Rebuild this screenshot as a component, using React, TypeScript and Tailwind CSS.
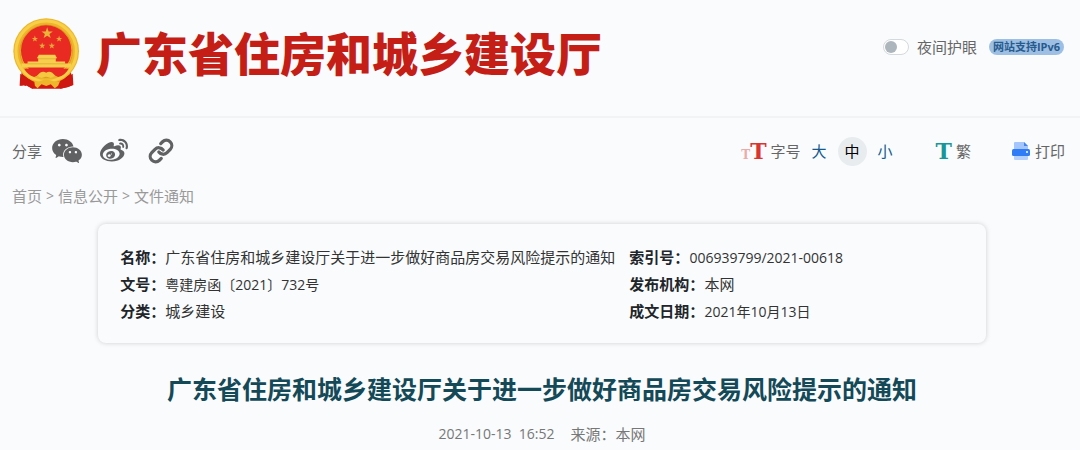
// App.tsx
import React, { useState } from 'react';
import { AiFillWechat } from 'react-icons/ai';
import { FaWeibo } from 'react-icons/fa';
import { Link } from 'lucide-react';

interface InfoItem {
  label: string;
  value: string;
  numeric?: boolean;
}

const leftInfo: InfoItem[] = [
  { label: '名称：', value: '广东省住房和城乡建设厅关于进一步做好商品房交易风险提示的通知' },
  { label: '文号：', value: '粤建房函〔2021〕732号', numeric: true },
  { label: '分类：', value: '城乡建设' },
];

const rightInfo: InfoItem[] = [
  { label: '索引号：', value: '006939799/2021-00618', numeric: true },
  { label: '发布机构：', value: '本网' },
  { label: '成文日期：', value: '2021年10月13日', numeric: true },
];

const crumbs = ['首页', '信息公开', '文件通知'];
const fontSizes = ['大', '中', '小'];

const STAR = 'M0 -10L2.4 -3.1L9.5 -3.1L3.8 1.2L5.9 8.1L0 4L-5.9 8.1L-3.8 1.2L-9.5 -3.1L-2.4 -3.1Z';

const Emblem: React.FC = () => (
  <svg className="h-[71px] w-[67px] shrink-0" viewBox="24 24 202 214" aria-hidden="true">
    <path d="M52 168L46 228L62 226L82 237H168L190 232L204 226L196 168Z" fill="#d3160f" />
    <path d="M52 180L66 210L60 228M196 180L182 210L190 228" fill="none" stroke="#a90f0c" strokeWidth="5" />
    <circle cx="124" cy="124" r="99" fill="#edb62a" />
    <circle cx="124" cy="124" r="91" fill="none" stroke="#f8cf48" strokeWidth="9" />
    <circle cx="124" cy="124" r="79" fill="none" stroke="#d99a20" strokeWidth="3" />
    <circle cx="124" cy="122" r="76" fill="#e92a22" />
    <path d={STAR} transform="translate(127 70) scale(1.8)" fill="#e9b63a" />
    <path d={STAR} transform="translate(90 87)" fill="#e9a93a" />
    <path d={STAR} transform="translate(163 87)" fill="#e9a93a" />
    <path d={STAR} transform="translate(112 108)" fill="#e9a93a" />
    <path d={STAR} transform="translate(141 108)" fill="#e9a93a" />
    <path d="M102 135H151L157 145H153V155H181V161H199V173H50V161H68V155H100V145H96Z" fill="#f6cf4c" />
    <path d="M99 147H154M68 162H182" stroke="#dda22d" strokeWidth="2" />
    <path d="M58 177H192C184 190 174 199 160 202L140 192Q124 182 108 192L88 202C74 198 64 188 58 177Z" fill="#e92a22" />
    <path d="M46 192L78 212L84 237L62 226L44 228ZM204 192L172 212L166 237L190 232L206 226Z" fill="#cf1712" />
    <path d="M96 199Q110 180 124 189Q138 180 152 199L138 205L124 200L110 205Z" fill="#f4c840" />
    <path d="M88 214C100 220 108 210 124 210C140 210 152 220 166 214L160 228L150 236L138 224L124 229L110 224L98 236L90 228Z" fill="#eeb62b" />
  </svg>
);

const PrintIcon: React.FC = () => (
  <svg className="h-5 w-5" viewBox="0 0 20 20" aria-hidden="true">
    <path d="M3 2a1 1 0 0 1 1-1h9l4 4v5H3z" fill="#a5c5fd" />
    <path d="M13 1l4 4h-4z" fill="#3f86f5" />
    <path d="M3 14h14v4a1 1 0 0 1-1 1H4a1 1 0 0 1-1-1z" fill="#b5d0fd" />
    <rect x="1" y="8" width="18" height="7" rx="1.5" fill="#2f7cf6" />
    <circle cx="16" cy="11" r="1" fill="#fff" />
  </svg>
);

const InfoList: React.FC<{ items: InfoItem[] }> = ({ items }) => (
  <dl className="text-[15px] leading-[27px] text-[#333]">
    {items.map((item) => (
      <div key={item.label} className="flex whitespace-nowrap">
        <dt className="font-bold text-[#212529]">{item.label}</dt>
        <dd className={item.numeric ? 'text-sm leading-[27px]' : ''}>{item.value}</dd>
      </div>
    ))}
  </dl>
);

const App: React.FC = () => {
  const [night, setNight] = useState(false);
  const [size, setSize] = useState('中');

  return (
    <div className="min-h-screen bg-[#f9fbfd] font-['Open_Sans','Noto_Sans_CJK_SC',sans-serif] text-[15px] leading-6 text-[#666]">
      <header className="flex items-start justify-between border-b-2 border-[#f1f3f5] pt-[18px] pr-4 pb-[27px] pl-[13px]">
        <div className="flex items-start gap-4">
          <Emblem />
          <span className="font-['Noto_Sans_CJK_SC',sans-serif] text-[46px] leading-[66px] font-black whitespace-nowrap text-[#c41e17]">
            广东省住房和城乡建设厅
          </span>
        </div>
        <div className="flex items-center gap-3 pt-[17px]">
          <label className="flex items-center gap-2">
            <input
              type="checkbox"
              checked={night}
              onChange={(e) => setNight(e.target.checked)}
              className="flex h-4 w-[26px] appearance-none items-center rounded-full border border-[#d5d9dd] bg-white px-px before:h-3 before:w-3 before:rounded-full before:bg-[#adb5bd] checked:justify-end"
            />
            夜间护眼
          </label>
          <a href="#ipv6" className="rounded-full bg-[#9dbfe4] px-1 text-[11px] leading-4 font-bold text-[#285b8d]">
            网站支持IPv6
          </a>
        </div>
      </header>

      <div className="flex h-[66px] items-center justify-between pr-[15px] pl-3">
        <div className="flex items-center">
          <span>分享</span>
          <a href="#wechat" aria-label="微信" className="ml-2"><AiFillWechat size={34} color="#606163" /></a>
          <a href="#weibo" aria-label="微博" className="ml-4"><FaWeibo size={28} color="#606163" /></a>
          <a href="#link" aria-label="复制链接" className="ml-5"><Link size={26} strokeWidth={3} color="#606163" /></a>
        </div>
        <div className="flex items-center">
          <span className="flex items-baseline font-['DejaVu_Serif',serif] font-bold" aria-hidden="true">
            <span className="text-xs text-[#ecaaa9]">T</span>
            <span className="text-[22px] text-[#d93531]">T</span>
          </span>
          <span className="ml-1">字号</span>
          <div className="ml-1 flex gap-1">
            {fontSizes.map((s) => (
              <button
                key={s}
                onClick={() => setSize(s)}
                className={`h-[29px] w-[29px] rounded-full ${s === size ? 'bg-[#e9ecef] text-black' : 'text-[#14598f]'}`}
              >
                {s}
              </button>
            ))}
          </div>
          <button className="ml-9 flex items-center gap-1">
            <span className="font-['DejaVu_Serif',serif] text-[22px] font-bold text-[#16989a]" aria-hidden="true">T</span>
            繁
          </button>
          <button className="ml-10 flex items-center gap-1">
            <PrintIcon />
            打印
          </button>
        </div>
      </div>

      <nav className="flex gap-1 pl-3 text-[#999]">
        {crumbs.map((c, i) => (
          <React.Fragment key={c}>
            {i > 0 && <span className="text-sm leading-6">&gt;</span>}
            <a href="#crumb">{c}</a>
          </React.Fragment>
        ))}
      </nav>

      <main className="pt-4 pl-1">
        <section className="mx-auto grid w-[82.5%] grid-cols-[510fr_335fr] rounded-lg px-[22px] pt-5 pb-[18px] shadow-[0_0_5px_rgba(0,0,0,0.18)]">
          <InfoList items={leftInfo} />
          <InfoList items={rightInfo} />
        </section>
        <h1 className="mt-7 text-center text-[25px] leading-9 font-bold text-[#144958]">
          广东省住房和城乡建设厅关于进一步做好商品房交易风险提示的通知
        </h1>
        <p className="mt-[15px] flex justify-center gap-4 text-[#777]">
          <time className="text-sm leading-6 whitespace-pre">2021-10-13  16:52</time>
          <span>来源：本网</span>
        </p>
      </main>
    </div>
  );
};

export default App;
